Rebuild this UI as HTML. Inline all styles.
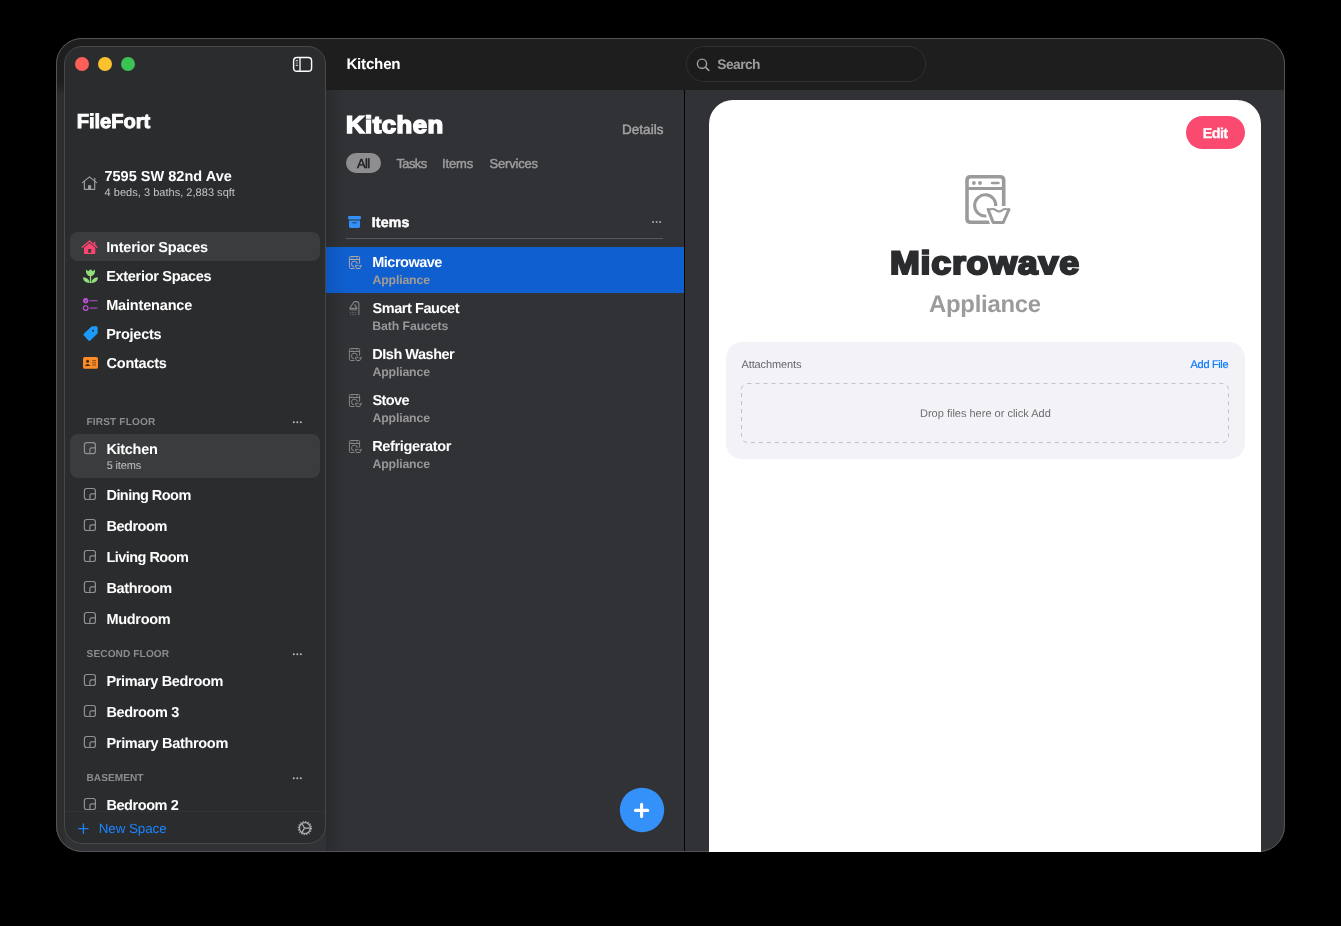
<!DOCTYPE html>
<html>
<head>
<meta charset="utf-8">
<title>FileFort</title>
<style>
*{box-sizing:border-box;margin:0;padding:0}
html,body{width:1341px;height:926px;background:#000;overflow:hidden}
body{font-family:"Liberation Sans",sans-serif;position:relative;color:#fff;text-rendering:geometricPrecision}
#tw{position:absolute;left:0;top:0;width:1341px;height:926px;will-change:transform}
.t{position:absolute;white-space:nowrap;line-height:1;color:#fff}
.a{position:absolute}
#win{left:56px;top:38px;width:1229px;height:814px;border-radius:26px;background:#313235;overflow:hidden}
#winborder{left:56px;top:38px;width:1229px;height:814px;border-radius:26px;border:1px solid #545455}
#titlebar{left:0;top:0;width:1229px;height:52px;background:#1e1e1e}
#sidebar{left:64px;top:46px;width:262px;height:798px;border-radius:18px;background:#2b2c2e;border:1px solid #47484a}
#sbshadow{left:326px;top:90px;width:20px;height:762px;background:linear-gradient(to right,rgba(0,0,0,0.14),rgba(0,0,0,0))}
.tl{width:14px;height:14px;border-radius:50%;top:57px}
.sel{left:70px;width:250px;border-radius:8px;background:#3b3c3e}
#divider{left:684px;top:90px;width:1px;height:762px;background:#040404}
#card{left:709px;top:100px;width:552px;height:752px;border-radius:24px 24px 0 0;background:#fff}
#pill{left:346px;top:153px;width:35px;height:20px;border-radius:10px;background:#8e8e90}
#hline{left:346px;top:238px;width:317px;height:1px;background:#58585a}
#rowsel{left:326px;top:247px;width:358px;height:46px;background:#0f5fd0}
#search{left:686px;top:46px;width:240px;height:35.5px;border-radius:18px;background:#1c1c1c;border:1px solid #303030}
#edit{left:1186px;top:116px;width:59px;height:33px;border-radius:16.5px;background:#fa4a70}
#att{left:725.5px;top:342px;width:519.5px;height:116.5px;border-radius:16px;background:#f2f2f7}
#sbline{left:65px;top:811px;width:260px;height:1px;background:#313234}
svg{position:absolute;left:0;top:0;overflow:visible}
</style>
</head>
<body>
<div id="win" class="a">
  <div id="titlebar" class="a"></div>
  <div class="a" style="left:0;top:44px;width:9px;height:770px;background:linear-gradient(to bottom,#1e1e1e 0,#2d2e30 14px)"></div>
</div>
<div id="sbshadow" class="a"></div>
<div id="divider" class="a"></div>

<!-- sidebar -->
<div id="sidebar" class="a"></div>
<div class="a tl" style="left:75px;background:#fe5f58"></div>
<div class="a tl" style="left:98px;background:#fcc12f"></div>
<div class="a tl" style="left:121px;background:#3bc455"></div>
<div class="a sel" style="top:232px;height:29px"></div>
<div class="a sel" style="top:434px;height:44px"></div>
<div id="sbline" class="a"></div>

<!-- middle -->
<div id="pill" class="a"></div>
<div id="hline" class="a"></div>
<div id="rowsel" class="a"></div>
<div class="a" style="left:326px;top:247px;width:20px;height:46px;background:linear-gradient(to right,rgba(0,0,0,0.10),rgba(0,0,0,0))"></div>

<div id="winborder" class="a"></div>
<!-- right -->
<div id="search" class="a"></div>
<div id="card" class="a"></div>
<div id="edit" class="a"></div>
<div id="att" class="a"></div>

<svg width="1341" height="926" viewBox="0 0 1341 926" fill="none">
<defs>
  <!-- dishwasher icon, local box 46 x 50 -->
  <symbol id="dw" viewBox="0 0 46 50" overflow="visible">
    <path d="M26,47.3 H5.6 Q2,47.3 2,43.7 V5.4 Q2,1.8 5.6,1.8 H35.1 Q38.7,1.8 38.7,5.4 V31" stroke="currentColor" stroke-width="3.6" fill="none"/>
    <path d="M2,13.6 H38.7" stroke="currentColor" stroke-width="3"/>
    <circle cx="8.9" cy="8" r="1.9" fill="currentColor"/>
    <circle cx="15" cy="8" r="1.9" fill="currentColor"/>
    <path d="M27,8 H33.5" stroke="currentColor" stroke-width="2.4" stroke-linecap="round"/>
    <path d="M30.6,32.6 A10.6,10.6 0 1 0 21.4,40.93" stroke="currentColor" stroke-width="3" fill="none"/>
    <path d="M23.1,34.5 L28.1,47.4 H38.3 L44,34.5 Z" stroke="var(--halo)" style="stroke-width:var(--hw,6.8)" stroke-linejoin="round" fill="var(--halo)"/>
    <path d="M23.1,34.5 L28.1,47.4 H38.3 L44,34.5" stroke="currentColor" stroke-width="3" stroke-linejoin="round" stroke-linecap="round" fill="none"/>
    <path d="M23.4,35.2 C25.5,33.7 29,33.6 31.2,35.3 C33.2,36.8 35,36.8 37,35.3 C39,33.8 41.5,33.7 43.7,35" stroke="currentColor" stroke-width="2.1" fill="none" stroke-linecap="round"/>
  </symbol>
  <symbol id="dws" viewBox="0 0 14 14" overflow="visible">
    <g stroke="currentColor" fill="none" stroke-width="1">
      <path d="M6,13 H2.1 Q0.9,13 0.9,11.8 V2.2 Q0.9,1 2.1,1 H9.9 Q11.1,1 11.1,2.2 V8.2"/>
      <path d="M0.9,4 H11.1"/>
      <path d="M7.6,2.5 H9.4" stroke-width=".8"/>
      <path d="M8.8,8.7 A2.9,2.9 0 1 0 5.7,11.4"/>
      <path d="M6.9,9.8 L8,13 H11.4 L12.8,9.8" stroke-linejoin="round" stroke-linecap="round"/>
      <path d="M7,10.1 Q8.4,9.3 9.8,10.2 T12.7,10" stroke-width=".8"/>
    </g>
    <circle cx="2.9" cy="2.5" r=".5" fill="currentColor"/><circle cx="4.5" cy="2.5" r=".5" fill="currentColor"/>
  </symbol>
  <symbol id="room" viewBox="0 0 12.2 12.2" overflow="visible">
    <rect x="0.6" y="0.6" width="11" height="11" rx="2.3" stroke="#8f9092" stroke-width="1.2" fill="none"/>
    <path d="M6.1,11.6 V7.6 Q6.1,5.9 7.8,5.9 H11.6" stroke="#8f9092" stroke-width="1.2" fill="none"/>
  </symbol>
</defs>

<!-- sidebar toggle -->
<rect x="293.6" y="57.5" width="18" height="13.8" rx="3.4" stroke="#fff" stroke-width="1.4"/>
<path d="M300,57.5 V71.3" stroke="#fff" stroke-width="1.3"/>
<path d="M295.7,60.7 H298" stroke="#fff" stroke-width="1" opacity=".9"/>
<path d="M295.7,63 H298" stroke="#fff" stroke-width="1" opacity=".55"/>
<path d="M295.7,65.3 H298" stroke="#fff" stroke-width="1" opacity=".9"/>

<!-- address house -->
<g stroke="#9c9c9e" stroke-width="1.2" fill="none" stroke-linecap="round" stroke-linejoin="round">
  <path d="M82.4,182.6 L89.5,176.9 L96.6,182.6"/>
  <path d="M94.7,178.3 V181"/>
  <path d="M84.4,181.4 V189.4 H94.7 V181.4"/>
</g>
<rect x="88" y="185.2" width="3.1" height="4.2" fill="#9c9c9e"/>

<!-- pink house -->
<g>
  <path d="M82.3,247.3 L89.6,241 L96.9,247.3" stroke="#fb4570" stroke-width="1.4" fill="none" stroke-linecap="round" stroke-linejoin="round"/>
  <rect x="93.9" y="241.8" width="1.4" height="3.6" fill="#fb4570"/>
  <path d="M84,247.7 L89.6,242.9 L95.3,247.7 V253.2 Q95.3,254.1 94.4,254.1 H84.9 Q84,254.1 84,253.2 Z" fill="#fb4570"/>
  <rect x="88.1" y="249" width="3.1" height="3.7" rx=".4" fill="#3b3c3e"/>
</g>

<!-- tulip -->
<g fill="#93e07a">
  <path d="M86,269.4 L88.2,271.2 L90.5,269.2 L92.8,271.2 L95,269.4 C95.4,273.4 93.6,276 90.5,276 C87.4,276 85.6,273.4 86,269.4 Z"/>
  <rect x="89.85" y="275.5" width="1.3" height="7.6"/>
  <path d="M89.7,283 C86,283.2 83.4,281.2 82.9,277.6 C86.6,277.4 89.3,279.4 89.7,283 Z"/>
  <path d="M91.3,283 C95,283.2 97.6,281.2 98.1,277.6 C94.4,277.4 91.7,279.4 91.3,283 Z"/>
</g>

<!-- maintenance -->
<g>
  <circle cx="85.7" cy="300.7" r="2.3" fill="#c354dc" stroke="#c354dc" stroke-width="1"/>
  <path d="M84.6,300.8 L85.4,301.6 L86.9,299.8" stroke="#2b2c2e" stroke-width=".8" fill="none"/>
  <circle cx="85.7" cy="308.1" r="2.3" stroke="#c354dc" stroke-width="1.1" fill="none"/>
  <path d="M90.2,300.7 H97" stroke="#a445bb" stroke-width="1.3" stroke-linecap="round"/>
  <path d="M90.2,308.1 H97" stroke="#a445bb" stroke-width="1.3" stroke-linecap="round"/>
</g>

<!-- tag -->
<path d="M84,333.4 L91,326.9 Q91.7,326.3 92.6,326.3 L96.2,326.3 Q97.7,326.3 97.7,327.8 L97.7,332.6 Q97.7,333.5 97.1,334.1 L90.2,340.5 Q89.3,341.3 88.4,340.4 L83.9,335.6 Q83,334.5 84,333.4 Z" fill="#1b9af7"/>
<circle cx="93" cy="330.7" r="1" fill="#2b2c2e"/>

<!-- contacts card -->
<rect x="83" y="357" width="15" height="11.8" rx="1.9" fill="#fd8c26"/>
<circle cx="87.6" cy="361.2" r="1.5" fill="#3a2a18"/>
<path d="M84.9,366 Q87.6,362.2 90.3,366 Z" fill="#3a2a18"/>
<path d="M92.2,360.7 H96 M92.2,362.9 H96 M92.2,365.1 H96" stroke="#4a3015" stroke-width=".7"/>

<!-- room icons -->
<use href="#room" x="83.8" y="442" width="12.2" height="12.2"/>
<use href="#room" x="83.8" y="487.9" width="12.2" height="12.2"/>
<use href="#room" x="83.8" y="518.9" width="12.2" height="12.2"/>
<use href="#room" x="83.8" y="549.9" width="12.2" height="12.2"/>
<use href="#room" x="83.8" y="580.9" width="12.2" height="12.2"/>
<use href="#room" x="83.8" y="611.9" width="12.2" height="12.2"/>
<use href="#room" x="83.8" y="673.9" width="12.2" height="12.2"/>
<use href="#room" x="83.8" y="704.9" width="12.2" height="12.2"/>
<use href="#room" x="83.8" y="735.9" width="12.2" height="12.2"/>
<use href="#room" x="83.8" y="797.9" width="12.2" height="12.2"/>

<!-- dots -->
<g fill="#bdbdc0">
  <circle cx="293.8" cy="422.3" r="1"/><circle cx="297.3" cy="422.3" r="1"/><circle cx="300.8" cy="422.3" r="1"/>
  <circle cx="293.8" cy="654.3" r="1"/><circle cx="297.3" cy="654.3" r="1"/><circle cx="300.8" cy="654.3" r="1"/>
  <circle cx="293.8" cy="778.2" r="1"/><circle cx="297.3" cy="778.2" r="1"/><circle cx="300.8" cy="778.2" r="1"/>
  <circle cx="653" cy="222" r="1" fill="#a9a9ab"/><circle cx="656.6" cy="222" r="1" fill="#a9a9ab"/><circle cx="660.2" cy="222" r="1" fill="#a9a9ab"/>
</g>

<!-- new space plus -->
<path d="M78.7,828.7 H88.1 M83.4,824 V833.4" stroke="#1a84fe" stroke-width="1.3" stroke-linecap="round"/>

<!-- gear -->
<g stroke="#b2b2b4" fill="none">
  <circle cx="304.9" cy="828.1" r="6.6" stroke-width="1.1" stroke-dasharray="1.25 1.342"/>
  <circle cx="304.9" cy="828.1" r="5.5" stroke-width="1.25"/>
  <path d="M304.5,828.1 H310 M304.5,828.1 L302,823.8 M304.5,828.1 L302,832.4" stroke-width="1.1"/>
</g>

<!-- magnifier -->
<circle cx="702" cy="63.7" r="4.6" stroke="#a0a0a2" stroke-width="1.4"/>
<path d="M705.4,67.1 L708.8,70.4" stroke="#a0a0a2" stroke-width="1.5" stroke-linecap="round"/>

<!-- archive box -->
<rect x="348" y="216" width="13" height="3.4" rx="1.3" fill="#3390f8"/>
<path d="M349,220.6 H360 V226.2 Q360,228.1 358.1,228.1 H350.9 Q349,228.1 349,226.2 Z" fill="#3390f8"/>
<rect x="352.2" y="222" width="4.6" height="1.4" rx=".7" fill="#23589a"/>

<!-- row icons -->
<use href="#dws" x="348.5" y="255.5" width="14" height="14" style="color:#b0a89e"/>
<use href="#dws" x="348.5" y="347.5" width="14" height="14" style="color:#858688"/>
<use href="#dws" x="348.5" y="393.5" width="14" height="14" style="color:#858688"/>
<use href="#dws" x="348.5" y="439.5" width="14" height="14" style="color:#858688"/>
<!-- shower -->
<g stroke="#858688" fill="none" stroke-width="1.1">
  <path d="M358.9,315 V304.5 Q358.9,301.6 356,301.6 H354"/>
  <path d="M354,301.8 L349.8,308.2 H357 L354.6,304.4" stroke-linejoin="round"/>
  <path d="M349.6,308.9 H357.2" stroke-width="1.4"/>
  <path d="M350.2,310.6 H356.6 M350.2,312.6 H356.6 M350.2,314.6 H356.6" stroke-width=".9" stroke-dasharray="1 .7" opacity=".75"/>
</g>

<!-- big icon -->
<use href="#dw" x="965" y="175" width="46" height="50" style="color:#9b9b9b;--halo:#fff"/>

<!-- dashed drop area -->
<rect x="741.5" y="383.5" width="487" height="59" rx="6" stroke="#c2c2c6" stroke-width="1" stroke-dasharray="4 4"/>

<!-- FAB -->
<circle cx="642" cy="810" r="22.2" fill="#3491f9"/>
<path d="M635.5,810.4 H647.7 M641.6,804.3 V816.5" stroke="#fff" stroke-width="3.1" stroke-linecap="round"/>
</svg>

<div id="tw">
<div class="t" style="left:76.66px;top:112px;font-size:20.2px;letter-spacing:-0.063px;font-weight:bold;-webkit-text-stroke:0.9px #ffffff;">FileFort</div>
<div class="t" style="left:104.39px;top:170px;font-size:14.5px;letter-spacing:0.029px;font-weight:bold;">7595 SW 82nd Ave</div>
<div class="t" style="left:104.56px;top:188px;font-size:11px;letter-spacing:0.028px;color:#c3c3c5;">4 beds, 3 baths, 2,883 sqft</div>
<div class="t" style="left:106.15px;top:241px;font-size:14.5px;letter-spacing:-0.198px;font-weight:bold;">Interior Spaces</div>
<div class="t" style="left:106.15px;top:270px;font-size:14.5px;letter-spacing:-0.293px;font-weight:bold;">Exterior Spaces</div>
<div class="t" style="left:106.15px;top:299px;font-size:14.5px;letter-spacing:-0.164px;font-weight:bold;">Maintenance</div>
<div class="t" style="left:106.15px;top:328px;font-size:14.5px;letter-spacing:-0.249px;font-weight:bold;">Projects</div>
<div class="t" style="left:106.55px;top:357px;font-size:14.5px;letter-spacing:-0.247px;font-weight:bold;">Contacts</div>
<div class="t" style="left:86.44px;top:418px;font-size:10.1px;letter-spacing:0.157px;font-weight:bold;color:#8b8b90;">FIRST FLOOR</div>
<div class="t" style="left:106.45px;top:443px;font-size:14.5px;letter-spacing:-0.307px;font-weight:bold;">Kitchen</div>
<div class="t" style="left:106.73px;top:461px;font-size:11px;letter-spacing:-0.165px;color:#c3c3c5;">5 items</div>
<div class="t" style="left:106.45px;top:489px;font-size:14.5px;letter-spacing:-0.533px;font-weight:bold;">Dining Room</div>
<div class="t" style="left:106.45px;top:520px;font-size:14.5px;letter-spacing:-0.465px;font-weight:bold;">Bedroom</div>
<div class="t" style="left:106.45px;top:551px;font-size:14.5px;letter-spacing:-0.537px;font-weight:bold;">Living Room</div>
<div class="t" style="left:106.45px;top:582px;font-size:14.5px;letter-spacing:-0.378px;font-weight:bold;">Bathroom</div>
<div class="t" style="left:106.45px;top:613px;font-size:14.5px;letter-spacing:-0.288px;font-weight:bold;">Mudroom</div>
<div class="t" style="left:86.54px;top:650px;font-size:10.1px;letter-spacing:0.117px;font-weight:bold;color:#8b8b90;">SECOND FLOOR</div>
<div class="t" style="left:106.45px;top:675px;font-size:14.5px;letter-spacing:-0.342px;font-weight:bold;">Primary Bedroom</div>
<div class="t" style="left:106.45px;top:706px;font-size:14.5px;letter-spacing:-0.371px;font-weight:bold;">Bedroom 3</div>
<div class="t" style="left:106.45px;top:737px;font-size:14.5px;letter-spacing:-0.310px;font-weight:bold;">Primary Bathroom</div>
<div class="t" style="left:86.44px;top:774px;font-size:10.1px;letter-spacing:0.066px;font-weight:bold;color:#8b8b90;">BASEMENT</div>
<div class="t" style="left:106.45px;top:799px;font-size:14.5px;letter-spacing:-0.430px;font-weight:bold;">Bedroom 2</div>
<div class="t" style="left:98.77px;top:822px;font-size:13.4px;letter-spacing:-0.072px;color:#1a84fe;">New Space</div>
<div class="t" style="left:346.39px;top:57px;font-size:15.2px;letter-spacing:-0.238px;font-weight:bold;">Kitchen</div>
<div class="t" style="left:346.43px;top:114px;font-size:24.2px;letter-spacing:0.494px;font-weight:bold;-webkit-text-stroke:1.6px #ffffff;transform:scaleX(1.06);transform-origin:0 0;">Kitchen</div>
<div class="t" style="left:622.01px;top:123px;font-size:13.5px;letter-spacing:0.033px;color:#a3a3a5;-webkit-text-stroke:0.45px #a3a3a5;">Details</div>
<div class="t" style="left:357.05px;top:157px;font-size:13px;letter-spacing:-0.679px;color:#1f1f21;-webkit-text-stroke:0.45px #1f1f21;">All</div>
<div class="t" style="left:396.48px;top:157px;font-size:13px;letter-spacing:-0.637px;color:#9d9da0;-webkit-text-stroke:0.45px #9d9da0;">Tasks</div>
<div class="t" style="left:442.08px;top:157px;font-size:13px;letter-spacing:-0.141px;color:#9d9da0;-webkit-text-stroke:0.45px #9d9da0;">Items</div>
<div class="t" style="left:489.59px;top:157px;font-size:13px;letter-spacing:-0.195px;color:#9d9da0;-webkit-text-stroke:0.45px #9d9da0;">Services</div>
<div class="t" style="left:371.68px;top:215px;font-size:14.1px;letter-spacing:0.213px;font-weight:bold;-webkit-text-stroke:0.5px #ffffff;">Items</div>
<div class="t" style="left:372.25px;top:256px;font-size:14.5px;letter-spacing:-0.495px;font-weight:bold;">Microwave</div>
<div class="t" style="left:372.51px;top:274px;font-size:12.3px;letter-spacing:-0.161px;font-weight:bold;color:#a39c92;">Appliance</div>
<div class="t" style="left:372.58px;top:302px;font-size:14.5px;letter-spacing:-0.448px;font-weight:bold;">Smart Faucet</div>
<div class="t" style="left:372.18px;top:320px;font-size:12.3px;letter-spacing:-0.089px;font-weight:bold;color:#98989b;">Bath Faucets</div>
<div class="t" style="left:372.25px;top:348px;font-size:14.5px;letter-spacing:-0.478px;font-weight:bold;">DIsh Washer</div>
<div class="t" style="left:372.51px;top:366px;font-size:12.3px;letter-spacing:-0.161px;font-weight:bold;color:#98989b;">Appliance</div>
<div class="t" style="left:372.58px;top:394px;font-size:14.5px;letter-spacing:-0.656px;font-weight:bold;">Stove</div>
<div class="t" style="left:372.51px;top:412px;font-size:12.3px;letter-spacing:-0.161px;font-weight:bold;color:#98989b;">Appliance</div>
<div class="t" style="left:372.25px;top:440px;font-size:14.5px;letter-spacing:-0.356px;font-weight:bold;">Refrigerator</div>
<div class="t" style="left:372.51px;top:458px;font-size:12.3px;letter-spacing:-0.161px;font-weight:bold;color:#98989b;">Appliance</div>
<div class="t" style="left:717.29px;top:58px;font-size:13.8px;letter-spacing:-0.565px;font-weight:bold;color:#9c9c9e;">Search</div>
<div class="t" style="left:1202.81px;top:127px;font-size:14.3px;letter-spacing:-0.555px;font-weight:bold;-webkit-text-stroke:0.3px #ffffff;">Edit</div>
<div class="t" style="left:890.30px;top:247px;font-size:32.5px;letter-spacing:0.707px;font-weight:bold;color:#2b2c2e;-webkit-text-stroke:2.2px #2b2c2e;transform:scaleX(1.1);transform-origin:0 0;">Microwave</div>
<div class="t" style="left:929.03px;top:293px;font-size:23.9px;letter-spacing:-0.260px;font-weight:bold;color:#9b9b9c;">Appliance</div>
<div class="t" style="left:741.46px;top:360px;font-size:11px;letter-spacing:-0.103px;color:#66666a;">Attachments</div>
<div class="t" style="left:1190.62px;top:360px;font-size:11px;letter-spacing:-0.338px;color:#0a7aff;-webkit-text-stroke:0.2px #0a7aff;">Add File</div>
<div class="t" style="left:919.99px;top:409px;font-size:11px;color:#6d6d70;">Drop files here or click Add</div>
</div>
</body>
</html>
